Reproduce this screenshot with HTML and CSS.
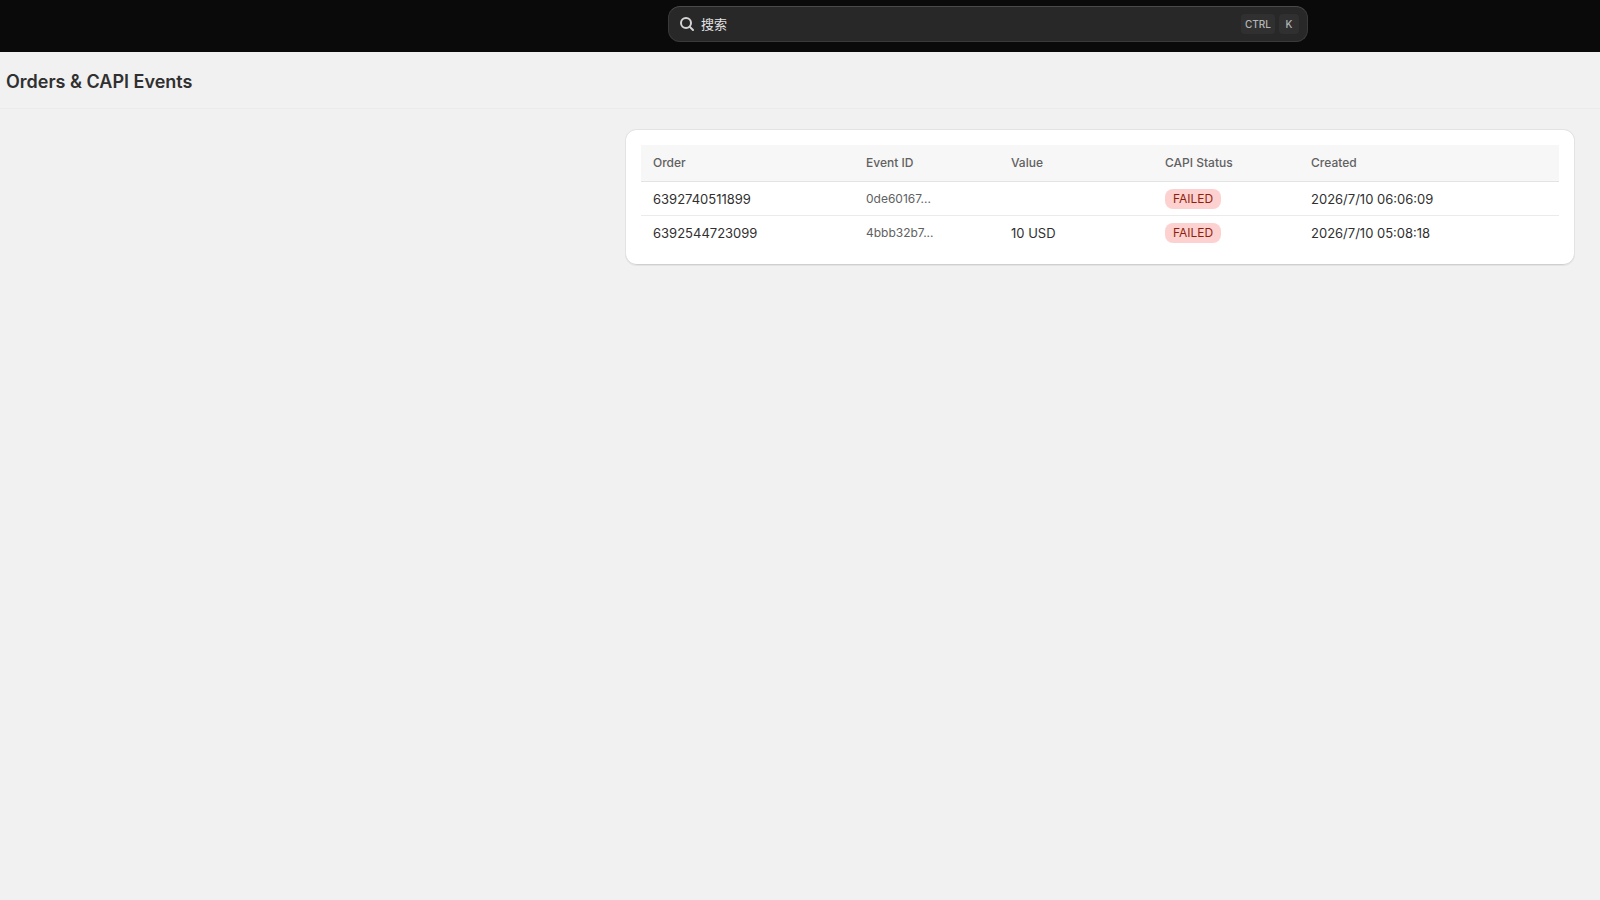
FILE: index.html
```html
<!DOCTYPE html>
<html lang="zh-CN">
<head>
  <meta charset="UTF-8">
  <meta name="viewport" content="width=device-width, initial-scale=1.0">
  <title>Orders &amp; CAPI Events</title>
  <link rel="stylesheet" href="styles.css">
</head>
<body>
  <header class="topbar">
    <button type="button" class="search">
      <svg class="search-icon" viewBox="0 0 20 20" width="20" height="20" aria-hidden="true">
        <circle cx="9" cy="9" r="5"></circle>
        <path d="M12.6 12.6 L16 16"></path>
      </svg>
      <span class="search-label">搜索</span>
      <kbd>CTRL</kbd>
      <kbd>K</kbd>
    </button>
  </header>

  <div class="title-bar">
    <h1>Orders &amp; CAPI Events</h1>
  </div>

  <main class="page">
    <section class="card">
      <table class="orders">
        <colgroup>
          <col class="col-order">
          <col class="col-event">
          <col class="col-value">
          <col class="col-status">
          <col class="col-created">
        </colgroup>
        <thead>
          <tr>
            <th scope="col">Order</th>
            <th scope="col">Event ID</th>
            <th scope="col">Value</th>
            <th scope="col">CAPI Status</th>
            <th scope="col">Created</th>
          </tr>
        </thead>
        <tbody>
          <tr>
            <td>6392740511899</td>
            <td class="subdued">0de60167...</td>
            <td></td>
            <td><span class="badge">FAILED</span></td>
            <td>2026/7/10 06:06:09</td>
          </tr>
          <tr>
            <td>6392544723099</td>
            <td class="subdued">4bbb32b7...</td>
            <td>10 USD</td>
            <td><span class="badge">FAILED</span></td>
            <td>2026/7/10 05:08:18</td>
          </tr>
        </tbody>
      </table>
    </section>
  </main>
</body>
</html>
```

FILE: styles.css
```css
* {
  box-sizing: border-box;
}
body {
  margin: 0;
  background: #f1f1f1;
  color: #303030;
  font-family: Inter, "Noto Sans CJK SC", sans-serif;
  font-size: 13px;
  line-height: 20px;
}
.topbar {
  display: flex;
  justify-content: center;
  height: 52px;
  padding: 6px 0 10px 376px;
  background: #0a0a0a;
}
.search {
  display: flex;
  align-items: center;
  gap: 4px;
  width: 100%;
  max-width: 640px;
  height: 36px;
  padding: 0 8px;
  border: 1px solid #3a3a3a;
  border-top-color: #4a4a4a;
  border-radius: 12px;
  background: #282828;
  color: #e3e3e3;
  font: inherit;
  text-align: left;
  cursor: pointer;
}
.search-icon {
  fill: none;
  stroke: #d4d4d4;
  stroke-width: 2;
  stroke-linecap: round;
}
.search-label {
  flex: 1;
}
.search kbd {
  min-width: 20px;
  padding: 0 4px;
  border-radius: 4px;
  background: #303030;
  color: #b5b5b5;
  font-family: inherit;
  font-size: 10px;
  font-weight: 500;
  line-height: 20px;
  text-align: center;
}
.title-bar {
  padding: 18px 6px 14px;
  border-bottom: 1px solid #ebebeb;
}
.title-bar h1 {
  margin: 0;
  font-size: 18px;
  font-weight: 600;
  line-height: 24px;
}
.page {
  padding: 20px 25px;
}
.card {
  max-width: 950px;
  margin-left: auto;
  padding: 16px;
  border-radius: 12px;
  background: #fff;
  box-shadow: inset 1px 0 0 #e3e3e3, inset -1px 0 0 #e3e3e3, inset 0 -1px 0 #cfcfcf, inset 0 1px 0 #e3e3e3, 0 1px 0 #e3e3e3;
}
.orders {
  width: 100%;
  table-layout: fixed;
  border-collapse: separate;
  border-spacing: 0;
}
.col-order {
  width: 213px;
}
.col-event {
  width: 145px;
}
.col-value {
  width: 154px;
}
.col-status {
  width: 146px;
}
.orders th {
  padding: 8px 12px;
  border-bottom: 1px solid #e3e3e3;
  background: #f7f7f7;
  color: #616161;
  font-size: 12px;
  font-weight: 500;
  text-align: left;
}
.orders td {
  padding: 7px 12px 6px;
  border-bottom: 1px solid #ebebeb;
  vertical-align: top;
}
.orders tbody tr:last-child td {
  border-bottom: 0;
}
.orders .subdued {
  color: #616161;
  font-size: 12px;
}
.badge {
  display: block;
  width: fit-content;
  padding: 0 8px;
  border-radius: 8px;
  background: #fed1d1;
  color: #8e1f0b;
  font-size: 12px;
}
```
